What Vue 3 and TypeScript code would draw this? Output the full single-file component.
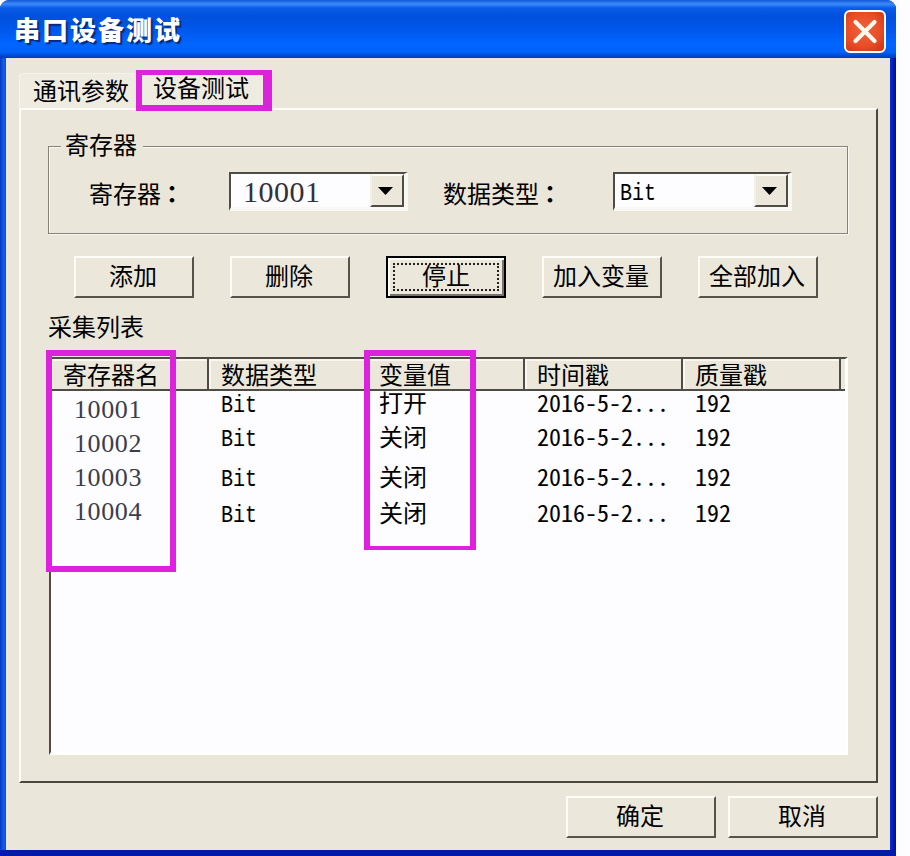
<script setup lang="ts">
interface Row {
  type: string
  value: string
  time: string
  quality: string
}

const registers: string[] = ['10001', '10002', '10003', '10004']
const columns: string[] = ['寄存器名', '数据类型', '变量值', '时间戳', '质量戳']
const actions: string[] = ['添加', '删除', '停止', '加入变量', '全部加入']
const rows: Row[] = ['打开', '关闭', '关闭', '关闭'].map((value) => ({
  type: 'Bit',
  value,
  time: '2016-5-2...',
  quality: '192',
}))
</script>

<template>
  <div class="window">
    <header class="titlebar">
      <h1>串口设备测试</h1>
      <button class="close" aria-label="关闭">
        <svg viewBox="0 0 42 43" width="42" height="43">
          <path d="M11.500 12L30.500 31M30.500 12L11.500 31" stroke="#fff8ee" stroke-width="4.200" stroke-linecap="round" />
        </svg>
      </button>
    </header>

    <main class="client">
      <nav class="tabs">
        <div class="tab">通讯参数</div>
        <div class="tab active">设备测试<i class="mark mark-tab"></i></div>
      </nav>

      <section class="panel">
        <div class="group">
          <span class="legend">寄存器</span>
          <label class="label-register">寄存器<span class="colon">：</span></label>
          <div class="combo">
            <span class="combo-number">10001</span>
            <span class="arrow"><svg viewBox="0 0 15 8" width="15" height="8"><path d="M0 0H15L7.500 8Z" /></svg></span>
          </div>
          <label class="label-type">数据类型<span class="colon">：</span></label>
          <div class="combo">
            <span class="latin">Bit</span>
            <span class="arrow"><svg viewBox="0 0 15 8" width="15" height="8"><path d="M0 0H15L7.500 8Z" /></svg></span>
          </div>
        </div>

        <div class="actions">
          <button v-for="name in actions" :key="name" class="btn" :class="{ focused: name === '停止' }">
            <span>{{ name }}</span>
          </button>
        </div>

        <div class="caption">采集列表</div>

        <div class="list">
          <div class="head">
            <div v-for="name in columns" :key="name" class="th">{{ name }}</div>
          </div>
          <div class="body">
            <div class="registers">
              <div v-for="name in registers" :key="name">{{ name }}</div>
            </div>
            <div class="rows">
              <div v-for="(row, i) in rows" :key="i" class="row">
                <div><span class="latin">{{ row.type }}</span></div>
                <div>{{ row.value }}</div>
                <div class="num">{{ row.time }}</div>
                <div class="num">{{ row.quality }}</div>
              </div>
            </div>
          </div>
          <i class="mark mark-name"></i>
          <i class="mark mark-value"></i>
        </div>
      </section>

      <footer class="footer">
        <button class="btn wide"><span>确定</span></button>
        <button class="btn wide"><span>取消</span></button>
      </footer>
    </main>
  </div>
</template>

<style>
body {
  background: #fdfcff;
}
</style>

<style scoped>
* {
  box-sizing: border-box;
}
.window {
  width: 896px;
  height: 856px;
  display: flex;
  flex-direction: column;
  border-bottom: 6px solid #001ba8;
  background: linear-gradient(90deg, #0437c4 0, #1662ea 4px, #0848d4 6px, #0848d4 50%, #0a28d0 891px, #0010a0 895px);
  border-radius: 9px 9px 0 0;
  overflow: hidden;
  color: #000;
  font: 24px/30px "Noto Sans CJK SC", sans-serif;
}
.titlebar {
  height: 58px;
  flex: none;
  display: flex;
  justify-content: space-between;
  align-items: center;
  padding: 5px 10px 0 14px;
  background: linear-gradient(180deg, #1557d8 0, #3a8cf8 4px, #0a5ce8 8px, #0050dc 16px, #0056ea 28px, #0066ff 44px, #0062fa 52px, #0038b8 58px);
}
h1 {
  margin: -5px 0 0;
  font-size: 26px;
  font-weight: 900;
  letter-spacing: 2px;
  line-height: 40px;
  color: #fff;
  text-shadow: 2px 2px 1px #062a7c;
}
.close {
  width: 42px;
  height: 43px;
  padding: 0;
  border: 2px solid #fff;
  border-radius: 6px;
  display: flex;
  align-items: center;
  justify-content: center;
  background: radial-gradient(circle at 45% 45%, #f0623a 0, #e84e28 55%, #cb3010 100%);
}
.close svg {
  flex: none;
  fill: none;
}
.client {
  margin: 0 6px;
  flex: 1;
  display: flex;
  flex-direction: column;
  padding: 12px 12px 13px 13px;
  background: #ebe6da;
}
.tabs {
  display: flex;
  height: 38px;
  flex: none;
}
.tab {
  width: 117px;
  margin-top: 3px;
  padding: 1px 0 0 13px;
  border-left: 1px solid #f8f6ee;
  border-top: 1px solid #f5f2ea;
  border-radius: 4px 4px 0 0;
  background: #eeebe1;
  white-space: nowrap;
}
.tab.active {
  position: relative;
  width: 136px;
  margin-top: 0;
  padding: 2px 0 0 17px;
  border: 0;
}
.mark {
  position: absolute;
  border: 6px solid #dc22dc;
  pointer-events: none;
}
.mark-tab {
  left: 0;
  top: 0;
  width: 136px;
  height: 41px;
  border-width: 5px 9px 6px 6px;
}
.mark-name {
  left: -5px;
  top: -9px;
  width: 130px;
  height: 222px;
}
.mark-value {
  left: 313px;
  top: -9px;
  width: 112px;
  height: 200px;
  border-bottom-width: 4px;
}
.panel {
  width: 859px;
  height: 675px;
  flex: none;
  padding: 36px 28px 0;
  border: 2px solid;
  border-color: #fdfcf6 #4a483f #4a483f #fdfcf6;
  display: flex;
  flex-direction: column;
}
.group {
  position: relative;
  width: 800px;
  height: 88px;
  margin-left: -1px;
  flex: none;
  display: flex;
  align-items: center;
  padding: 5px 0 0 40px;
  border: 1px solid #85827a;
  box-shadow: 1px 1px 0 #faf8f0, inset 1px 1px 0 #faf8f0;
}
.legend {
  position: absolute;
  left: 12px;
  top: -18px;
  padding: 0 6px 0 4px;
  background: #ebe6da;
}
.label-register {
  width: 140px;
}
.label-type {
  width: 170px;
  margin-left: 35px;
}
.colon {
  font-family: "Noto Sans CJK TC", sans-serif;
  font-weight: 700;
  margin-left: -1px;
}
.combo {
  width: 179px;
  height: 39px;
  margin-top: -2px;
  display: flex;
  justify-content: space-between;
  align-items: center;
  padding-left: 5px;
  border-style: solid;
  border-width: 2px 4px 4px 2px;
  border-color: #4e4c45 #f8f7f1 #f8f7f1 #4e4c45;
  background: #fdfcff;
}
.combo-number {
  padding: 2px 0 0 7px;
  font: 30px/32px "Liberation Serif", serif;
  letter-spacing: 0.5px;
  color: #333039;
}
.arrow {
  width: 34px;
  height: 33px;
  display: flex;
  align-items: center;
  justify-content: center;
  padding-right: 4px;
  background: #ebe7da;
  border: 2px solid;
  border-color: #fbfaf3 #4e4c45 #4e4c45 #f3f1e8;
}
.latin {
  display: block;
  width: 36px;
  font: 20px/26px "Liberation Mono", monospace;
  transform: translateY(2px) scaleY(1.2);
}
.combo .latin {
  margin-top: 2px;
}
.actions {
  display: flex;
  gap: 36px;
  margin: 22px 0 0 25px;
}
.btn {
  width: 120px;
  height: 42px;
  flex: none;
  display: flex;
  align-items: center;
  justify-content: center;
  padding: 0 2px 5px 0;
  border: 2px solid;
  border-color: #fdfcf5 #55534b #55534b #fdfcf5;
  background: #ece7db;
  color: #000;
  font: inherit;
  white-space: nowrap;
}
.btn.focused {
  padding: 4px;
  border-color: #000;
  box-shadow: inset 2px 2px 0 #fdfcf5, inset -2px -2px 0 #77746a;
}
.btn.focused span {
  width: 106px;
  height: 28px;
  border: 2px dotted #222;
  line-height: 20px;
}
.btn.wide {
  width: 150px;
}
.caption {
  margin: 13px 0 0 -1px;
}
.list {
  position: relative;
  width: 799px;
  height: 398px;
  margin-top: 16px;
  flex: none;
  border-style: solid;
  border-width: 2px 3px 3px 2px;
  border-color: #4e4c45 #fffffb #fffffb #4e4c45;
  background: #fdfcff;
}
.head {
  height: 32px;
  display: flex;
  background: #ebe7da;
  border-bottom: 2px solid #4e4c45;
}
.th {
  width: 158px;
  height: 30px;
  padding-left: 12px;
  border-right: 2px solid #4e4c45;
  box-shadow: inset 2px 2px 0 #f8f6ee;
  line-height: 29px;
}
.body {
  display: flex;
}
.registers {
  width: 158px;
  padding: 2px 0 0 23px;
  font: 26px/34px "Liberation Serif", serif;
  letter-spacing: 0.6px;
  color: #3a3d4c;
}
.row {
  display: grid;
  grid-template-columns: repeat(4, 158px);
  height: 26px;
  line-height: 22px;
  margin-bottom: 8px;
}
.row:nth-child(2) {
  margin-bottom: 14px;
}
.row:nth-child(3) {
  margin-bottom: 10px;
}
.row > div {
  padding-left: 12px;
  height: 26px;
}
.num {
  font-feature-settings: "hwid";
}
.footer {
  display: flex;
  justify-content: flex-end;
  gap: 12px;
  margin-top: 13px;
}
</style>
